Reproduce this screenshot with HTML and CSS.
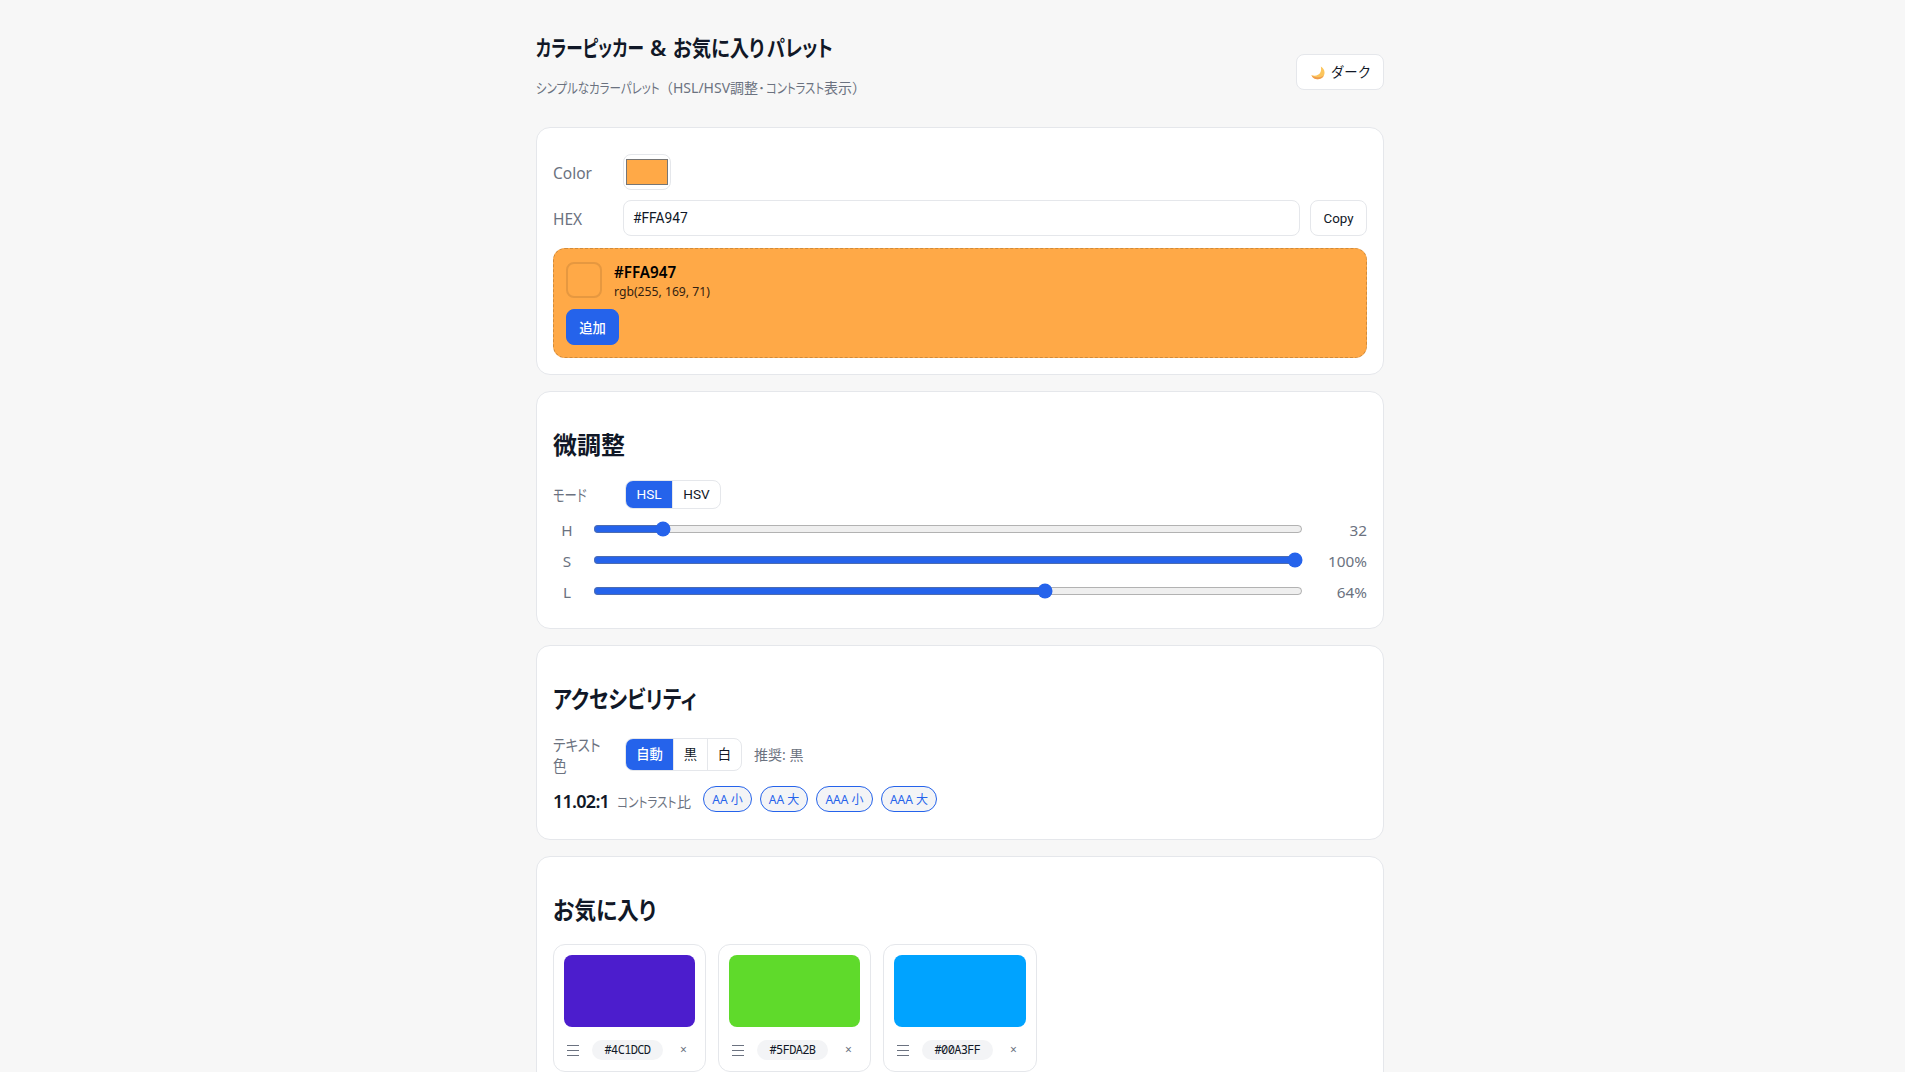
FILE: index.html
```html
<!DOCTYPE html>
<html lang="ja">
<head>
<meta charset="utf-8">
<title>カラーピッカー &amp; お気に入りパレット</title>
<link rel="stylesheet" href="styles.css">
</head>
<body>
<main class="page">
  <header class="header">
    <div>
      <h1 class="title"><span class="kana k-picker">カラーピッカー</span><span class="amp">&amp;</span><span class="kana k-fav">お気に入り</span><span class="kana k-palette">パレット</span></h1>
      <p class="subtitle"><span class="kana k-simple">シンプルなカラーパレット</span><span>（HSL/HSV調整</span><span class="dot">･</span><span class="kana k-contrast">コントラスト</span><span>表示）</span></p>
    </div>
    <button class="btn theme">
      <svg class="moon" viewBox="0 0 14 14"><path d="M9.800.6C14.600 3.200 14.800 9.600 10.300 12.200 6.600 14.300 2 13 .4 9.200c4 1.100 7.400.2 8.900-2.700C10.300 4.700 10.200 2.600 9.800.6z" fill="#fcc55c"/><path d="M.4 9.200C2 13 6.600 14.300 10.300 12.200c1.300-.8 2.200-1.800 2.700-3C9.800 12 4.500 12 .4 9.200z" fill="#ee9b4d"/></svg>
      <span>ダーク</span>
    </button>
  </header>

  <section class="card picker">
    <div class="row color-row"><span class="label low">Color</span><span class="color-input"><span class="color-well"></span></span></div>
    <div class="row hex-row"><span class="label low">HEX</span><input class="hex" type="text" value="#FFA947"><button class="btn copy">Copy</button></div>
    <div class="preview">
      <div class="preview-info">
        <span class="preview-swatch"></span>
        <div><div class="preview-hex">#FFA947</div><div class="preview-rgb">rgb(255, 169, 71)</div></div>
      </div>
      <button class="btn primary">追加</button>
    </div>
  </section>

  <section class="card adjust">
    <h2>微調整</h2>
    <div class="row mode-row"><span class="label"><span class="kana k-mode">モード</span></span>
      <div class="seg"><span class="seg-item active w46">HSL</span><span class="seg-item w48">HSV</span></div></div>
    <div class="slider"><span class="ch">H</span><input type="range" min="0" max="360" value="32"><span class="val">32</span></div>
    <div class="slider"><span class="ch">S</span><input type="range" min="0" max="100" value="100"><span class="val">100%</span></div>
    <div class="slider"><span class="ch">L</span><input type="range" min="0" max="100" value="64"><span class="val">64%</span></div>
  </section>

  <section class="card a11y">
    <h2><span class="kana k-a11y">アクセシビリティ</span></h2>
    <div class="row text-row"><span class="label two-line"><span class="kana k-text">テキスト<br>色</span></span>
      <div class="seg tall"><span class="seg-item active w47">自動</span><span class="seg-item w34">黒</span><span class="seg-item w34">白</span></div>
      <span class="hint">推奨: 黒</span></div>
    <div class="ratio-row"><span class="ratio">11.02:1</span><span class="ratio-label"><span class="kana k-ratio">コントラスト</span><span>比</span></span>
      <div class="badges"><span class="badge b49">AA 小</span><span class="badge b48">AA 大</span><span class="badge b57">AAA 小</span><span class="badge b56">AAA 大</span></div></div>
  </section>

  <section class="card favs">
    <h2><span class="kana k-favs">お気に入り</span></h2>
    <div class="fav-grid">
      <article class="fav"><div class="fav-color violet"></div><div class="fav-meta"><span class="handle"></span><code class="chip">#4C1DCD</code><span class="remove">×</span></div></article>
      <article class="fav"><div class="fav-color green"></div><div class="fav-meta"><span class="handle"></span><code class="chip">#5FDA2B</code><span class="remove">×</span></div></article>
      <article class="fav"><div class="fav-color blue"></div><div class="fav-meta"><span class="handle"></span><code class="chip">#00A3FF</code><span class="remove">×</span></div></article>
    </div>
  </section>
</main>
</body>
</html>
```
FILE: styles.css
```css
* { box-sizing: border-box; }
html { height: 100%; overflow: hidden; }
body {
  margin: 0; height: 100%; overflow: hidden;
  background: #f7f7f7; color: #111827;
  font: 16px/22px "Noto Sans", "Noto Sans CJK JP", sans-serif;
}
h1, h2, p { margin: 0; }
.page { width: 848px; margin-left: 536px; padding-top: 26px; }
.header { display: flex; justify-content: space-between; height: 101px; }
.title { display: flex; height: 41px; font-size: 22px; line-height: 42px; font-weight: 600; white-space: nowrap; }
.subtitle { display: flex; height: 40px; font-size: 14px; line-height: 42px; color: #6b7280; white-space: nowrap; }

/* condensed proportional kana */
.kana { display: inline-block; white-space: nowrap; transform-origin: 0 50%; font-feature-settings: "palt"; }
.k-picker { width: 114px; transform: scaleX(.755); }
.amp { width: 23px; }
.k-fav { width: 94px; transform: scaleX(.88); }
.k-palette { width: 66px; transform: scaleX(.83); }
.k-simple { width: 123px; transform: scaleX(.82); }
.dot { width: 8px; }
.k-contrast { width: 58px; transform: scaleX(.81); }
.k-mode { transform: scaleX(.77); }
.k-a11y { transform: scaleX(.842); }
.k-text { transform: scaleX(.85); }
.k-ratio { width: 60px; transform: scaleX(.83); }
.k-favs { transform: scaleX(.91); }

.btn {
  display: flex; align-items: center; justify-content: center;
  height: 36px; padding: 0; border: 1px solid #e5e7eb; border-radius: 8px;
  background: #fff; color: #111827; font: 13.333px Roboto, "Noto Sans CJK JP", sans-serif;
}
.theme { width: 88px; margin-top: 28px; gap: 6px; padding: 0 0 1px 2px; }
.moon { width: 14px; height: 14px; margin-top: 3px; }
.card { border: 1px solid #e5e7eb; border-radius: 14px; background: #fff; padding: 16px; margin-bottom: 16px; }
.picker { height: 248px; padding-top: 26px; }
.adjust { height: 238px; padding-top: 29px; }
.a11y { height: 195px; padding-top: 29px; }
.favs { height: 260px; padding-top: 29px; margin-bottom: 0; }
h2 { height: 48px; font-size: 24px; line-height: 48px; font-weight: 600; }
.row { display: flex; align-items: center; }
.label { width: 70px; flex: none; color: #6b7280; }
.low { padding-top: 2px; font-size: 15.500px; }
.color-row { height: 36px; margin-bottom: 10px; }
.color-input { width: 48px; height: 36px; border: 1px solid #e5e7eb; border-radius: 8px; padding: 4px 2px; display: flex; }
.color-well { flex: 1; background: #ffa947; border: 1px solid #767676; }
.hex-row { height: 36px; margin-bottom: 12px; }
.hex { flex: 1; height: 36px; border: 1px solid #e5e7eb; border-radius: 8px; padding: 0 9px; font: 13.800px Roboto, sans-serif; color: #111827; }
.copy { width: 57px; margin-left: 10px; }
.preview { height: 110px; border: 1px dashed #d18b3b; border-radius: 12px; background: #ffa947; padding: 13px 12px; color: #000; }
.preview-info { display: flex; gap: 12px; height: 47px; }
.preview-swatch { width: 36px; height: 36px; border: 2px solid #e69840; border-radius: 8px; }
.preview-hex { font-size: 15.200px; line-height: 20px; font-weight: 600; }
.preview-rgb { font-size: 12.200px; line-height: 20px; color: #332211; }
.primary { width: 53px; background: #2563eb; border-color: #2563eb; color: #fff; font-weight: 500; }
.mode-row { height: 29px; margin-top: 11px; margin-bottom: 4px; }
.seg { display: flex; margin-left: 2px; height: 29px; border: 1px solid #e5e7eb; border-radius: 8px; overflow: hidden; font: 13.600px Roboto, "Noto Sans CJK JP", sans-serif; }
.seg.tall { height: 33px; margin-bottom: 2px; font-size: 13.333px; }
.seg-item { display: flex; align-items: center; justify-content: center; padding-bottom: 1px; }
.seg-item + .seg-item { border-left: 1px solid #e5e7eb; }
.active { background: #2563eb; color: #fff; }
.seg.tall .active { font-weight: 500; }
.w46 { width: 46px; }
.w47 { width: 47px; }
.w48 { width: 48px; }
.w34 { width: 34px; }
.slider { display: flex; align-items: center; height: 31px; color: #6b7280; font-size: 15.300px; }
.slider input { width: 710px; height: 16px; margin: 0 0 0 12px; accent-color: #2563eb; }
.ch { width: 28px; text-align: center; }
.val { flex: 1; text-align: right; }
.ch, .val { padding-top: 3px; }
.text-row { height: 44px; margin-top: 10px; }
.hint { margin-left: 12px; padding-bottom: 1px; font-size: 14px; color: #6b7280; }
.two-line { line-height: 21px; padding-top: 2px; }
.ratio-row { display: flex; align-items: center; height: 30px; margin-top: 9px; }
.ratio { width: 64px; font-size: 18px; font-weight: 600; letter-spacing: -.75px; }
.ratio-label { display: flex; width: 86px; padding-top: 2px; font-size: 14px; color: #6b7280; }
.badges { display: flex; gap: 8px; margin-top: -4px; }
.badge { height: 26px; border: 1px solid #2563eb; border-radius: 13px; background: #f3f4f6; color: #2563eb; font-size: 12px; line-height: 25px; text-align: center; white-space: nowrap; }
.b49 { width: 49px; }
.b48 { width: 48px; }
.b57 { width: 57px; }
.b56 { width: 56px; }
.fav-grid { display: grid; grid-template-columns: 153px 153px 154px; gap: 12px; margin-top: 10px; }
.fav { height: 128px; border: 1px solid #e5e7eb; border-radius: 12px; padding: 10px; }
.fav-color { height: 72px; border-radius: 8px; }
.violet { background: #4c1dcd; }
.green { background: #5fda2b; }
.blue { background: #00a3ff; }
.fav-meta { display: flex; align-items: center; margin-top: 13px; height: 20px; }
.handle { width: 12px; height: 11px; margin-left: 3px; border: solid #6b7280; border-width: 1px 0; background: linear-gradient(#6b7280, #6b7280) 0 4px / 100% 1px no-repeat; }
.chip { width: 71px; height: 20px; margin-left: 13px; border-radius: 10px; background: #f3f4f6; font: 12px/20px "Noto Sans Mono", "DejaVu Sans Mono", monospace; letter-spacing: -.65px; text-align: center; }
.remove { margin-left: 17px; font-size: 12px; color: #6b7280; }
```
